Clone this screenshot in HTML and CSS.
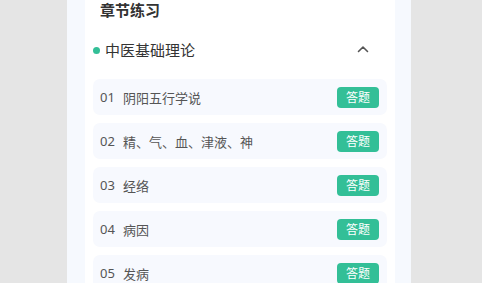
FILE: index.html
```html
<!DOCTYPE html>
<html lang="zh-CN">
<head>
  <meta charset="UTF-8">
  <meta name="viewport" content="width=device-width, initial-scale=1.0">
  <title>章节练习</title>
  <link rel="stylesheet" href="styles.css">
</head>
<body>
  <div class="page">
    <div class="card">
      <!-- 标题 -->
      <h2 class="title">章节练习</h2>
      <!-- 分类 -->
      <div class="section-head">
        <span class="dot"></span>
        <span class="section-name">中医基础理论</span>
        <svg class="arrow" width="12" height="8" viewBox="0 0 12 8">
          <path d="M1.5 6.5 L6 2 L10.5 6.5" fill="none" stroke="#555" stroke-width="1.6" stroke-linecap="round" stroke-linejoin="round"/>
        </svg>
      </div>
      <!-- 章节列表 -->
      <ul class="list">
        <li><span class="num">01</span><span class="name">阴阳五行学说</span><span class="btn">答题</span></li>
        <li><span class="num">02</span><span class="name">精、气、血、津液、神</span><span class="btn">答题</span></li>
        <li><span class="num">03</span><span class="name">经络</span><span class="btn">答题</span></li>
        <li><span class="num">04</span><span class="name">病因</span><span class="btn">答题</span></li>
        <li><span class="num">05</span><span class="name">发病</span><span class="btn">答题</span></li>
      </ul>
    </div>
  </div>
</body>
</html>
```

FILE: styles.css
```css
/* 重置样式 */
* {
  margin: 0;
  padding: 0;
  box-sizing: border-box;
}
li {
  list-style-type: none;
}
body {
  background-color: #e5e5e5;
  font-family: "Noto Sans", "Noto Sans CJK SC", sans-serif;
  color: #333;
  height: 283px;
  overflow: hidden;
}
/* 页面容器 */
.page {
  width: 344px;
  margin-left: 67px;
  height: 283px;
  padding: 0 16px 0 18px;
  background-color: #f6f9fe;
}
.card {
  height: 100%;
  padding: 0 8px;
  background-color: #fff;
}
/* 标题 */
.title {
  padding-left: 7px;
  font-size: 15px;
  line-height: 20px;
  font-weight: 700;
  color: #333;
}
/* 分类头部 */
.section-head {
  display: flex;
  align-items: center;
  height: 40px;
  margin-top: 10px;
  padding-right: 18px;
}
.dot {
  width: 7px;
  height: 7px;
  border-radius: 50%;
  margin-right: 5px;
  background-color: #33bf97;
}
.section-name {
  flex: 1;
  font-size: 15px;
  line-height: 20px;
  color: #333;
}
.arrow {
  margin-top: -3px;
}
/* 章节列表 */
.list {
  display: flex;
  flex-direction: column;
  gap: 8px;
  margin-top: 9px;
}
.list li {
  display: flex;
  align-items: center;
  height: 36px;
  padding: 0 8px 0 7px;
  border-radius: 7px;
  background-color: #f7f9fe;
}
.num {
  width: 23px;
  font-size: 13px;
  color: #555;
}
.name {
  flex: 1;
  font-size: 13px;
  color: #555;
}
.btn {
  width: 42px;
  height: 21px;
  line-height: 21px;
  text-align: center;
  border-radius: 4px;
  font-size: 12px;
  color: #fff;
  background-color: #33bf97;
}
```
